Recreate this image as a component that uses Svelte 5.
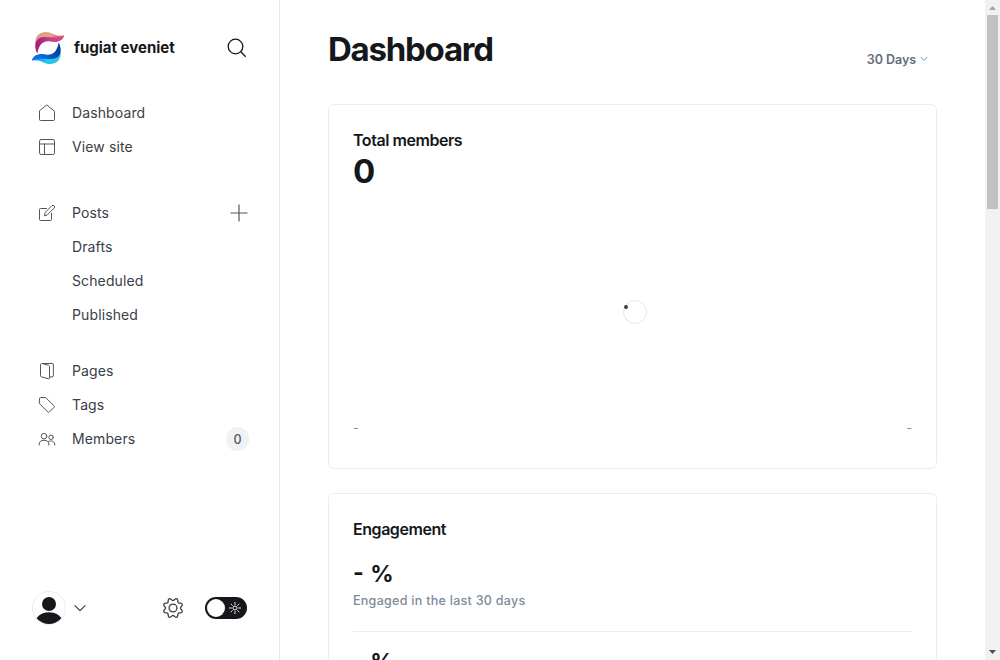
<script>
  const groups = [
    [
      { label: 'Dashboard', icon: 'house' },
      { label: 'View site', icon: 'layout' }
    ],
    [
      { label: 'Posts', icon: 'pen', add: true },
      { label: 'Drafts' },
      { label: 'Scheduled' },
      { label: 'Published' }
    ],
    [
      { label: 'Pages', icon: 'pages' },
      { label: 'Tags', icon: 'tag' },
      { label: 'Members', icon: 'members', count: 0 }
    ]
  ];

  // Eight rounded teeth, with a gap at twelve o'clock.
  const gear = 'M' + Array.from({ length: 96 }, (_, i) => {
    const a = (i / 96) * Math.PI * 2;
    const r = 8.7 - 1.25 * Math.cos(8 * a);
    return `${(11 + r * Math.cos(a)).toFixed(2)} ${(11 + r * Math.sin(a)).toFixed(2)}`;
  }).join('L') + 'Z';
</script>

<div class="app">
  <aside>
    <header class="brand">
      <svg class="logo" viewBox="0 0 32 32" width="32" height="32">
        <defs>
          <linearGradient id="sand" x1="0" x2="1"><stop stop-color="#d99a7c" /><stop offset=".55" stop-color="#e3a58b" /><stop offset="1" stop-color="#d9467f" /></linearGradient>
          <linearGradient id="pink" x1="0" x2="1"><stop stop-color="#a3187f" /><stop offset=".5" stop-color="#c53b8c" /><stop offset="1" stop-color="#e04c86" /></linearGradient>
          <linearGradient id="blue" x1="0" x2="1"><stop stop-color="#0878f0" /><stop offset=".5" stop-color="#0a62dc" /><stop offset="1" stop-color="#063a96" /></linearGradient>
          <linearGradient id="aqua" x1="0" x2="1"><stop stop-color="#1686ee" /><stop offset=".5" stop-color="#20c8e8" /><stop offset="1" stop-color="#26cbd0" /></linearGradient>
        </defs>
        <path fill="url(#sand)" d="M5.3 21.5C3.6 18 2.9 14.400 3.200 10.500C3.600 3.500 8 0 14 0C20 0 23.500 5.200 32 3.500C31 8.500 25 10 19 9C11 7.500 6 13 5.300 21.500Z" />
        <path fill="url(#pink)" d="M5.300 21.500C2.500 16 2.700 8.500 7.500 6.200C14 3.300 21 7.500 32 3.500C31 9 25 11 18.500 9.500C10.500 8 6.500 14 5.300 21.500Z" />
        <path fill="url(#aqua)" d="M26.700 10.500C28.400 14 29.100 17.600 28.800 21.500C28.400 28.500 24 32 18 32C12 32 8.500 26.800 0 28.500C1 23.500 7 22 13 23C21 24.500 26 19 26.700 10.500Z" />
        <path fill="url(#blue)" d="M26.700 10.500C29.500 16 29.300 23.500 24.500 25.800C18 28.700 11 24.500 0 28.500C1 23 7 21 13.500 22.500C21.500 24 25.500 18 26.700 10.500Z" />
      </svg>
      <strong>fugiat eveniet</strong>
      <svg class="search" width="20" height="20" viewBox="0 0 20 20"><circle cx="8.500" cy="8.500" r="7.300" /><path d="M13.800 13.800L18.700 18.700" /></svg>
    </header>

    <nav>
      {#each groups as group}
        <ul>
          {#each group as item}
            <li>
              <span class="icon">
                {#if item.icon}
                  <svg class={item.icon} width="18" height="18" viewBox="0 0 18 18">
                    {#if item.icon === 'house'}
                      <path d="M1.500 7.200V15.500Q1.500 16.500 2.500 16.500H15.500Q16.500 16.500 16.500 15.500V7.200L9 1.200Z" />
                    {:else if item.icon === 'layout'}
                      <rect x="1.500" y="1.500" width="15" height="15" rx="1.700" /><path d="M1.500 6H16.500M6.500 6V16.500" />
                    {:else if item.icon === 'pen'}
                      <path d="M8.500 4.500H2.500Q1.500 4.500 1.500 5.500V15.500Q1.500 16.500 2.500 16.500H12.500Q13.500 16.500 13.500 15.500V9.500" />
                      <path d="M6.500 11.500L7.300 8.300L13.900 1.700Q15 .700 16.100 1.800Q17.200 2.900 16.200 4L9.600 10.600Z" />
                    {:else if item.icon === 'pages'}
                      <path d="M3.200 1.500Q2.500 1.500 2.500 2.500V13.600Q2.500 14.600 3.500 14.900L10.300 16.700Q11.500 17 11.500 15.900V4.600Q11.500 3.600 10.500 3.200L4 1.500H14Q15.400 1.500 15.400 2.700V13.700Q15.400 14.900 14 14.900H11.500" />
                    {:else if item.icon === 'tag'}
                      <path d="M1.500 2.500Q1.500 1.500 2.500 1.500H7.600L16.200 10Q16.800 10.600 16.200 11.200L11.200 16.200Q10.600 16.800 10 16.200L1.500 7.700Z" />
                    {:else}
                      <circle cx="6" cy="6.200" r="2.800" /><circle cx="13.100" cy="7.300" r="2.200" />
                      <path d="M1.200 15V14Q1.500 10.300 6 10.300Q10.500 10.300 10.800 14V15M10.500 11.500C13.500 9.900 16.800 11.300 16.800 15" />
                    {/if}
                  </svg>
                {/if}
              </span>
              <span class="label">{item.label}</span>
              {#if item.add}
                <svg class="plus" width="18" height="18" viewBox="0 0 18 18"><path d="M9 .500V17.500M.500 9H17.500" /></svg>
              {/if}
              {#if item.count !== undefined}<span class="count">{item.count}</span>{/if}
            </li>
          {/each}
        </ul>
      {/each}
    </nav>

    <footer>
      <svg width="34" height="34" viewBox="0 0 34 34">
        <defs><clipPath id="face"><circle cx="17" cy="17" r="16" /></clipPath></defs>
        <circle cx="17" cy="17" r="16.500" fill="#fff" stroke="#e9ebed" />
        <g clip-path="url(#face)" fill="#15171a"><circle cx="17" cy="13" r="7" /><ellipse cx="17" cy="32.300" rx="14" ry="11" /></g>
      </svg>
      <svg class="caret" width="12" height="8" viewBox="0 0 12 8"><path d="M.700 1.300L6 6.700L11.300 1.300" /></svg>
      <svg class="gear" width="22" height="22" viewBox="0 0 22 22"><path d={gear} /><circle cx="11" cy="11" r="3.900" /></svg>
      <span class="switch">
        <span class="knob"></span>
        <svg width="12" height="12" viewBox="0 0 12 12"><circle cx="6" cy="6" r="2" /><path d="M6 0V2.800M6 9.200V12M0 6H2.800M9.200 6H12M1.800 1.800L3.600 3.600M8.400 8.400L10.200 10.200M1.800 10.200L3.600 8.400M8.400 3.600L10.200 1.800" /></svg>
      </span>
    </footer>
  </aside>

  <main>
    <div class="title">
      <h1>Dashboard</h1>
      <div class="period"><span>30 Days</span><svg width="8" height="6" viewBox="0 0 8 6"><path d="M.800 1L4 4.500L7.200 1" /></svg></div>
    </div>
    <section class="members-card">
      <h2>Total members</h2>
      <div class="total">0</div>
      <div class="chart"><div class="spinner"><i></i></div></div>
      <div class="range"><span>-</span><span>-</span></div>
    </section>
    <section class="engagement">
      <h2>Engagement</h2>
      <div class="metric">
        <div class="value">- %</div>
        <p>Engaged in the last 30 days</p>
      </div>
      <div class="metric">
        <div class="value">- %</div>
      </div>
    </section>
  </main>

  <div class="scrollbar">
    <svg width="15" height="15" viewBox="0 0 15 15"><path fill="#a3a3a3" d="M4 10L7.500 6L11 10Z" /></svg>
    <div class="thumb"></div>
    <svg class="down" width="15" height="15" viewBox="0 0 15 15"><path fill="#505050" d="M4 5L7.500 9L11 5Z" /></svg>
  </div>
</div>

<style>
  :global(body) { margin: 0; overflow: hidden; }
  * { box-sizing: border-box; }
  svg { display: block; flex: none; fill: none; }
  h1, h2, p, ul { margin: 0; padding: 0; }
  .app { display: flex; width: 1000px; height: 660px; overflow: hidden; background: #fff; color: #15171a; font-family: Inter, sans-serif; font-optical-sizing: none; }
  aside { display: flex; flex-direction: column; width: 280px; border-right: 1px solid #e6e9eb; padding: 32px 30px 35px 32px; }
  .brand { display: flex; align-items: center; height: 32px; }
  .brand strong { margin-left: 10px; font-size: 15px; font-weight: 700; line-height: 20px; }
  .search { margin: 0 2px 0 auto; stroke: #15171a; stroke-width: 1.300; }
  nav { display: flex; flex-direction: column; margin-top: 32px; }
  ul { list-style: none; }
  ul:nth-child(2) { margin-top: 32px; }
  ul:nth-child(3) { margin-top: 22px; }
  li { display: flex; align-items: center; height: 34px; padding-left: 6px; color: #394047; font-size: 14px; letter-spacing: .120px; }
  .label { padding-bottom: 2px; }
  .icon { width: 34px; }
  .icon svg { stroke: #50565d; stroke-width: 1; stroke-linejoin: round; stroke-linecap: round; }
  .plus { margin: 0 1px 0 auto; stroke: #50565d; stroke-width: 1.200; }
  .count { display: grid; place-items: center; width: 23px; height: 24px; margin-left: auto; border-radius: 12px; background: #f1f2f4; color: #545d68; font-size: 12.500px; font-weight: 500; letter-spacing: 0; }
  footer { display: flex; align-items: center; height: 34px; margin-top: auto; }
  .caret { margin-left: 8px; stroke: #394047; stroke-width: 1.100; }
  .gear { margin-left: auto; stroke: #394047; stroke-width: 1.300; }
  .switch { display: flex; align-items: center; justify-content: space-between; width: 42px; height: 22px; margin: 0 2px 0 21px; padding: 0 6px 0 2px; border-radius: 11px; background: #15171a; }
  .knob { width: 18px; height: 18px; border-radius: 50%; background: #fff; }
  .switch svg { stroke: #fff; stroke-width: .900; }
  main { flex: 1; min-width: 0; padding: 0 48px; }
  .title { display: flex; justify-content: space-between; height: 104px; padding-top: 29px; }
  h1 { font-size: 33px; font-weight: 700; line-height: 41px; letter-spacing: -1.250px; }
  .period { display: flex; align-items: center; gap: 4px; height: 20px; margin: 20px 9px 0 0; color: #626d79; font-size: 12.500px; font-weight: 600; letter-spacing: -.050px; }
  .period svg { stroke: #8b949e; }
  section { border: 1px solid #ebeef0; border-radius: 6px; padding: 23px 24px; }
  h2 { font-size: 16px; font-weight: 600; line-height: 24px; letter-spacing: -.450px; }
  .members-card { display: flex; flex-direction: column; height: 365px; }
  .total { font-size: 33px; font-weight: 700; line-height: 38px; }
  .chart { display: grid; place-items: center; height: 205px; padding: 38px 0 0 4px; }
  .spinner { width: 24px; height: 24px; border: 1px solid #e4e6e8; border-radius: 50%; padding: 4px 0 0; }
  .spinner i { display: block; width: 4px; height: 4px; border-radius: 50%; background: #394047; }
  .range { display: flex; justify-content: space-between; margin-top: 24px; color: #7c8b9a; font-size: 12px; line-height: 18px; }
  .engagement { height: 365px; margin-top: 24px; }
  .metric { height: 91px; padding-top: 15px; border-bottom: 1px solid #ebeef0; }
  .metric + .metric { padding-top: 12px; }
  .metric .value { font-size: 23px; font-weight: 700; line-height: 36px; word-spacing: 1px; }
  p { color: #7c8b9a; font-size: 12.500px; font-weight: 500; line-height: 18px; letter-spacing: .280px; }
  .scrollbar { display: flex; flex-direction: column; width: 15px; height: 660px; background: #f1f1f1; }
  .thumb { width: 11px; height: 194px; margin-left: 2px; background: #c1c1c1; }
  .down { margin-top: auto; }
</style>
